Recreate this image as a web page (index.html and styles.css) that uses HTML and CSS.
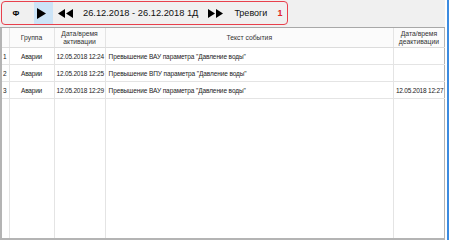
FILE: index.html
```html
<!DOCTYPE html>
<html lang="ru">

<head>
    <meta charset="utf-8">
    <link rel="stylesheet" href="styles.css">
</head>

<body>
    <div class="window">
        <div class="toolbar">
            <div class="filter-box">
                <div class="btn btn-f">Ф</div>
                <div class="btn btn-play">
                    <svg width="9" height="11" viewBox="0 0 9 11"><polygon points="0,0 9,5.5 0,11" fill="#000" /></svg>
                </div>
                <div class="btn btn-rew">
                    <svg width="15" height="9" viewBox="0 0 15 9"><polygon points="7,0 0,4.5 7,9" fill="#000" /><polygon points="15,0 8,4.5 15,9" fill="#000" /></svg>
                </div>
                <span class="period">26.12.2018 - 26.12.2018 1Д</span>
                <div class="btn btn-ff">
                    <svg width="15" height="9" viewBox="0 0 15 9"><polygon points="0,0 7,4.5 0,9" fill="#000" /><polygon points="8,0 15,4.5 8,9" fill="#000" /></svg>
                </div>
                <span class="alarms">Тревоги</span>
                <span class="alarms-count">1</span>
            </div>
        </div>

        <div class="grid-wrap">
            <table class="events">
                <colgroup>
                    <col class="c-num">
                    <col class="c-group">
                    <col class="c-date">
                    <col class="c-text">
                    <col class="c-date">
                </colgroup>
                <thead>
                    <tr>
                        <th></th>
                        <th>Группа</th>
                        <th>Дата/время<br>активации</th>
                        <th>Текст события</th>
                        <th>Дата/время<br>деактивации</th>
                    </tr>
                </thead>
                <tbody>
                    <tr class="row">
                        <td class="num">1</td>
                        <td class="group">Аварии</td>
                        <td>12.05.2018 12:24</td>
                        <td class="text">Превышение ВАУ параметра "Давление воды"</td>
                        <td></td>
                    </tr>
                    <tr class="row">
                        <td class="num">2</td>
                        <td class="group">Аварии</td>
                        <td>12.05.2018 12:25</td>
                        <td class="text">Превышение ВПУ параметра "Давление воды"</td>
                        <td></td>
                    </tr>
                    <tr class="row">
                        <td class="num">3</td>
                        <td class="group">Аварии</td>
                        <td>12.05.2018 12:29</td>
                        <td class="text">Превышение ВАУ параметра "Давление воды"</td>
                        <td>12.05.2018 12:27</td>
                    </tr>
                    <tr class="filler">
                        <td></td>
                        <td></td>
                        <td></td>
                        <td></td>
                        <td></td>
                    </tr>
                </tbody>
            </table>
        </div>
    </div>
</body>

</html>
```

FILE: styles.css
```css
html,
body {
    margin: 0;
    background: #ffffff;
}

.window {
    font-family: "Liberation Sans", Arial, sans-serif;
    width: 447px;
    height: 240px;
    border-right: 2px solid #3c8be0;
    display: flex;
    flex-direction: column;
}

.toolbar {
    height: 28px;
    background: #f0f0f0;
    border-bottom: 1px solid #a8a8a8;
    margin-right: 2px;
    padding: 1px 0 0 1px;
    box-sizing: border-box;
}

.filter-box {
    display: flex;
    align-items: center;
    width: 287px;
    height: 24px;
    box-sizing: border-box;
    border: 1px solid #e8404c;
    border-radius: 4px;
    padding-left: 1px;
}

.btn {
    display: flex;
    align-items: center;
    justify-content: center;
    height: 22px;
}

.btn-f {
    width: 26px;
    font-size: 8px;
    font-weight: bold;
    color: #000;
}

.btn-play {
    width: 19px;
    margin-left: 5px;
    background: #cce4f7;
    padding-right: 4px;
    box-sizing: border-box;
}

.btn-rew {
    width: 15px;
    margin-left: 5px;
}

.period {
    margin-left: 10px;
    font-size: 9.3px;
    color: #111;
}

.btn-ff {
    width: 15px;
    margin-left: 10px;
}

.alarms {
    margin-left: 11px;
    font-size: 9px;
    color: #111;
}

.alarms-count {
    margin-left: 10px;
    font-size: 9px;
    font-weight: bold;
    color: #e02424;
}

.grid-wrap {
    flex: 1;
    display: flex;
    margin-right: 2px;
    border-left: 2px solid #b4b4b4;
    border-bottom: 2px solid #b4b4b4;
}

.events {
    width: 443px;
    height: 100%;
    table-layout: fixed;
    border-collapse: collapse;
    border-right: 1px solid #b4b4b4;
    font-size: 6.5px;
    color: #222;
}

.c-num {
    width: 7px;
}

.c-group {
    width: 45px;
}

.c-date {
    width: 51px;
}

.c-text {
    width: 288px;
}

.events th {
    height: 19px;
    padding: 0;
    font-weight: normal;
    font-size: 6.8px;
    color: #333;
    line-height: 8px;
    text-align: center;
    background: #fbfbfb;
    border-left: 1px solid #e4e4e4;
    border-bottom: 1px solid #dcdcdc;
}

.events td {
    padding: 0 0 0 2px;
    white-space: nowrap;
    overflow: hidden;
    letter-spacing: -0.2px;
    border-left: 1px solid #e4e4e4;
}

.events th:first-child,
.events td:first-child {
    border-left: none;
}

.row td {
    height: 16px;
    border-bottom: 1px solid #e4e4e4;
}

.events .num {
    padding-left: 1px;
}

.events .group {
    text-align: center;
    padding: 0;
}

.events .text {
    padding-left: 3px;
    letter-spacing: -0.1px;
}
```
